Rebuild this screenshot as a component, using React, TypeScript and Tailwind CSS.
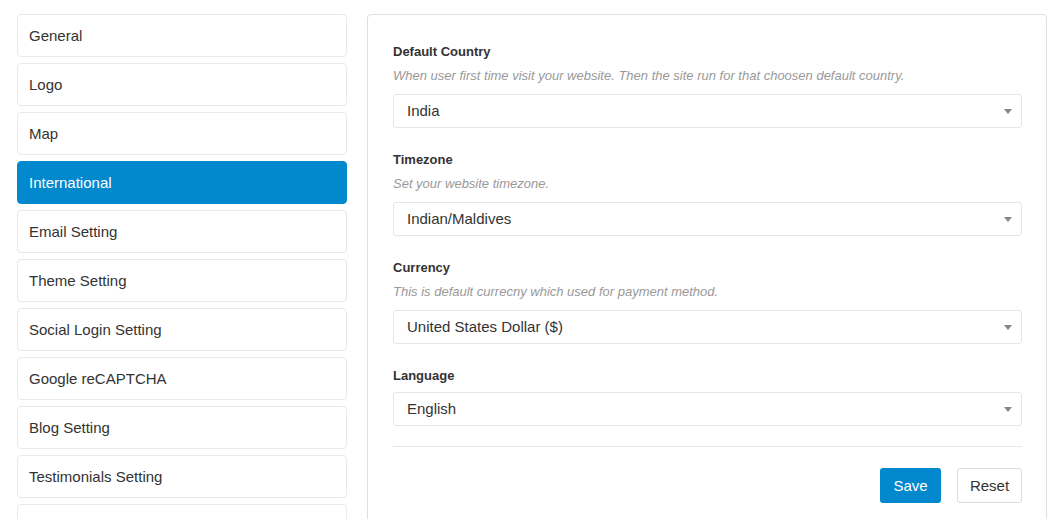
import React from "react";

const items = [
  "General",
  "Logo",
  "Map",
  "International",
  "Email Setting",
  "Theme Setting",
  "Social Login Setting",
  "Google reCAPTCHA",
  "Blog Setting",
  "Testimonials Setting",
  "",
];

function Select({ value }: { value: string }) {
  return (
    <div className="h-[34px] border border-[#e6e6e6] rounded-[3px] flex items-center justify-between pl-[13px] pr-[9px] pt-[1px] text-[15px] text-[#333]">
      <span>{value}</span>
      <svg width="8" height="5" viewBox="0 0 8 5">
        <path d="M0 0 L8 0 L4 5 Z" fill="#888" />
      </svg>
    </div>
  );
}

function Group({
  label,
  desc,
  value,
}: {
  label: string;
  desc?: string;
  value: string;
}) {
  return (
    <div>
      <div className="text-[13px] font-bold leading-[18px] text-[#333]">{label}</div>
      {desc ? (
        <div className="mt-[6px] text-[13px] italic leading-[18px] text-[#999]">{desc}</div>
      ) : null}
      <div className={desc ? "mt-[9px]" : "mt-[7px]"}>
        <Select value={value} />
      </div>
    </div>
  );
}

export default function App() {
  return (
    <div
      className="w-[1063px] h-[519px] overflow-hidden bg-white flex pt-[14px] pl-[17px] pr-[16px] gap-[20px]"
      style={{ fontFamily: '"Liberation Sans", Arial, sans-serif' }}
    >
      <div className="w-[330px] shrink-0 flex flex-col gap-[6px]">
        {items.map((it, i) => {
          const active = it === "International";
          return (
            <div
              key={i}
              className={
                active
                  ? "h-[43px] shrink-0 rounded-[4px] border border-[#0288cc] bg-[#0288cc] text-white flex items-center pl-[11px] pt-[2px] text-[15px]"
                  : "h-[43px] shrink-0 rounded-[4px] border border-[#e8e8ee] bg-white text-[#333] flex items-center pl-[11px] pt-[2px] text-[15px]"
              }
            >
              {it}
            </div>
          );
        })}
      </div>
      <div className="flex-1 h-[560px] border border-[#dcdfe6] rounded-[4px] pt-[28px] pl-[25px] pr-[24px]">
        <Group
          label="Default Country"
          desc="When user first time visit your website. Then the site run for that choosen default country."
          value="India"
        />
        <div className="mt-[23px]">
          <Group label="Timezone" desc="Set your website timezone." value="Indian/Maldives" />
        </div>
        <div className="mt-[23px]">
          <Group
            label="Currency"
            desc="This is default currecny which used for payment method."
            value="United States Dollar ($)"
          />
        </div>
        <div className="mt-[23px]">
          <Group label="Language" value="English" />
        </div>
        <div className="mt-[20px] h-px bg-[#e6e6ee]" />
        <div className="mt-[21px] flex justify-end gap-[16px]">
          <button className="h-[35px] w-[61px] rounded-[3px] bg-[#0288cc] text-white text-[15px] pt-[1px]">
            Save
          </button>
          <button className="h-[35px] w-[65px] rounded-[3px] border border-[#dcdcdc] bg-white text-[#333] text-[15px] pt-[1px]">
            Reset
          </button>
        </div>
      </div>
    </div>
  );
}
